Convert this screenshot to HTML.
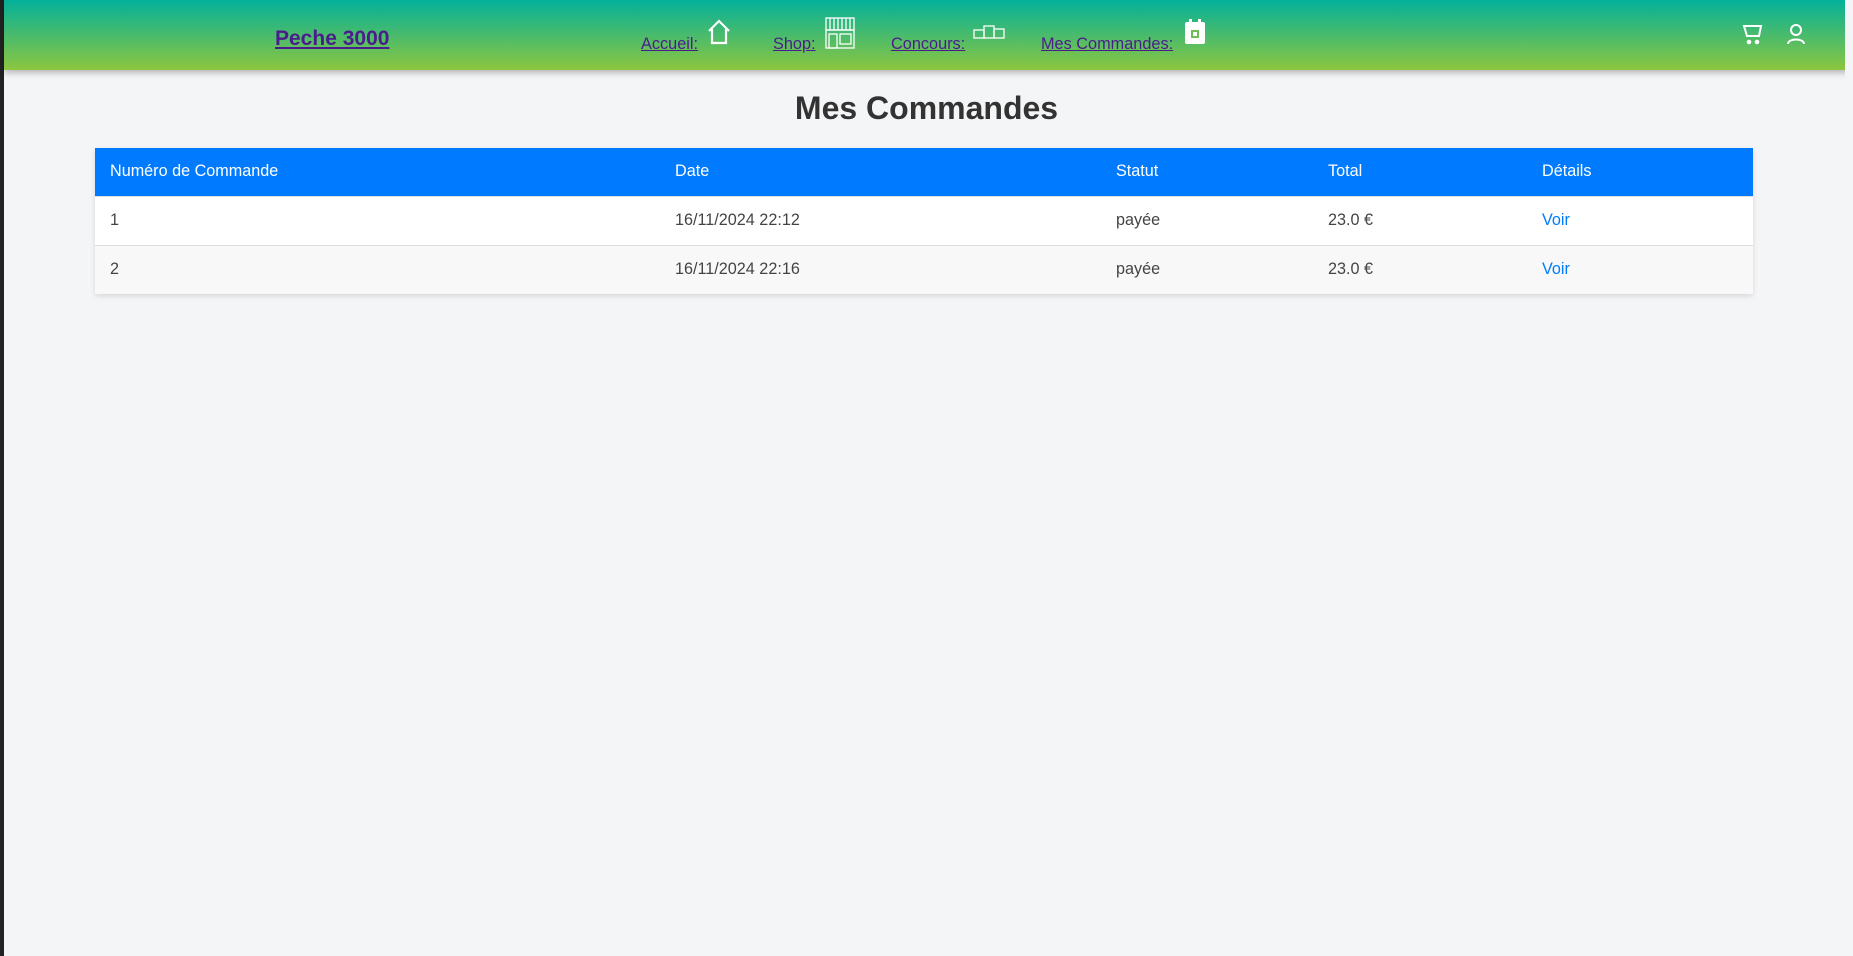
<!DOCTYPE html>
<html><head><meta charset="utf-8"><style>
*{box-sizing:border-box;margin:0;padding:0}
html,body{width:1853px;height:956px;overflow:hidden}
body{background:#f4f5f7;font-family:"Liberation Sans",Arial,sans-serif;position:relative;border-left:4px solid #222}
.hdr{position:absolute;left:0;top:0;width:1845px;height:70px;background:linear-gradient(#04b09a,#8dc63f);box-shadow:0 3px 6px rgba(0,0,0,.25)}
.right{position:absolute;right:0;top:0;width:8px;height:956px;background:#f4f5f7}
.logo{position:absolute;left:271px;top:27px;font-size:21px;font-weight:bold;color:#4b1c8c;text-decoration:underline}
.nav{position:absolute;top:35px;font-size:16.3px;color:#4b1c8c;text-decoration:underline}
.ic{position:absolute}
h1{position:absolute;left:0;width:1845px;text-align:center;top:90px;font-size:32px;color:#333}
table{position:absolute;left:91px;top:148px;width:1658px;border-collapse:collapse;font-size:16.2px;box-shadow:0 2px 5px rgba(0,0,0,.12)}
th{background:#007bff;color:#fff;font-weight:normal;text-align:left;height:48px;padding-left:15px}
td{height:49px;padding-left:15px;color:#444;border-top:1px solid #ddd}
tr.a td{background:#fff}tr.b td{background:#f8f8f8}
td a{color:#007bff;text-decoration:none}
</style></head><body>
<div class="hdr">
<div class="logo">Peche 3000</div>
<div class="nav" style="left:637px">Accueil: </div>
<svg class="ic" style="left:701px;top:18px" width="28" height="28" viewBox="0 0 28 28" fill="none" stroke="#fff" stroke-width="2.2"><path d="M4 13 L14 3 L24 13 M7 11 V25 H21 V11"/></svg>
<div class="nav" style="left:769px">Shop: </div>
<svg class="ic" style="left:820px;top:16px" width="32" height="34" viewBox="0 0 32 34" fill="none" stroke="#fff" stroke-width="1.3"><rect x="2" y="2" width="28" height="12"/><path d="M6 2v12M10 2v12M14 2v12M18 2v12M22 2v12M26 2v12"/><rect x="2" y="14" width="28" height="18"/><rect x="5" y="18" width="8" height="14"/><rect x="16" y="18" width="11" height="10"/></svg>
<div class="nav" style="left:887px">Concours: </div>
<svg class="ic" style="left:968px;top:24px" width="34" height="16" viewBox="0 0 34 16" fill="none" stroke="#fff" stroke-width="1.3"><rect x="12" y="2" width="10" height="12"/><rect x="2" y="6" width="10" height="8"/><rect x="22" y="5" width="10" height="9"/></svg>
<div class="nav" style="left:1037px">Mes Commandes: </div>
<svg class="ic" style="left:1180px;top:19px" width="22" height="26" viewBox="0 0 22 26"><rect x="1" y="3" width="20" height="22" rx="2" fill="#fff"/><rect x="5" y="0" width="3" height="5" fill="#fff"/><rect x="14" y="0" width="3" height="5" fill="#fff"/><rect x="7" y="11" width="8" height="8" fill="#6dbf55"/><rect x="9" y="13" width="4" height="4" fill="#fff"/></svg>
<svg class="ic" style="left:1738px;top:24px" width="22" height="22" viewBox="0 0 22 22" fill="none" stroke="#fff" stroke-width="2"><path d="M2 2H19L17 12H5Z"/><circle cx="7" cy="18" r="1.3" fill="#fff"/><circle cx="15" cy="18" r="1.3" fill="#fff"/></svg>
<svg class="ic" style="left:1782px;top:23px" width="20" height="24" viewBox="0 0 20 24" fill="none" stroke="#fff" stroke-width="2"><circle cx="10" cy="7" r="5"/><path d="M2 21C2 15 18 15 18 21"/></svg>
</div>
<div class="right"></div>
<h1>Mes Commandes</h1>
<table>
<tr><th style="width:565px">Numéro de Commande</th><th style="width:441px">Date</th><th style="width:212px">Statut</th><th style="width:214px">Total</th><th>Détails</th></tr>
<tr class="a"><td>1</td><td>16/11/2024 22:12</td><td>payée</td><td>23.0 €</td><td><a>Voir</a></td></tr>
<tr class="b"><td>2</td><td>16/11/2024 22:16</td><td>payée</td><td>23.0 €</td><td><a>Voir</a></td></tr>
</table>
</body></html>
